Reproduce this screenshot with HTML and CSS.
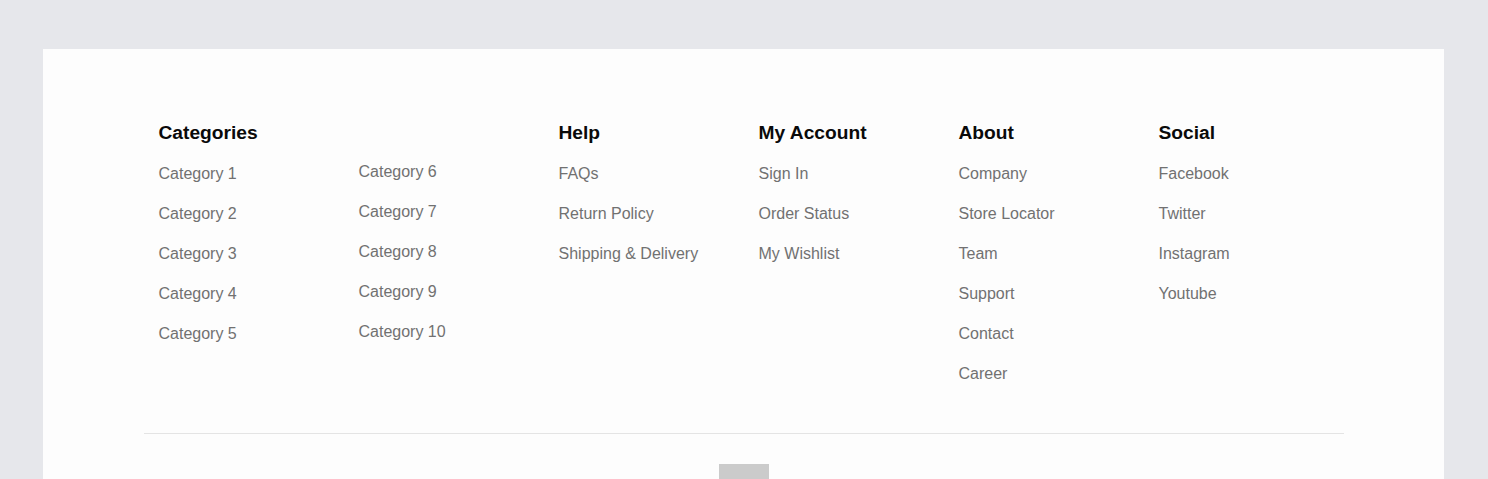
FILE: index.html
```html
<!DOCTYPE html>
<html lang="en">
<head>
<meta charset="utf-8">
<title>Footer</title>
<link rel="stylesheet" href="styles.css">
</head>
<body>
<footer class="panel">
  <div class="container">
    <div class="cols">
      <div class="col">
        <h3 class="col-title">Categories</h3>
        <ul class="links">
          <li><a href="#">Category 1</a></li>
          <li><a href="#">Category 2</a></li>
          <li><a href="#">Category 3</a></li>
          <li><a href="#">Category 4</a></li>
          <li><a href="#">Category 5</a></li>
        </ul>
      </div>
      <div class="col">
        <div class="col-title" aria-hidden="true">&nbsp;</div>
        <ul class="links links-cont">
          <li><a href="#">Category 6</a></li>
          <li><a href="#">Category 7</a></li>
          <li><a href="#">Category 8</a></li>
          <li><a href="#">Category 9</a></li>
          <li><a href="#">Category 10</a></li>
        </ul>
      </div>
      <div class="col">
        <h3 class="col-title">Help</h3>
        <ul class="links">
          <li><a href="#">FAQs</a></li>
          <li><a href="#">Return Policy</a></li>
          <li><a href="#">Shipping &amp; Delivery</a></li>
        </ul>
      </div>
      <div class="col">
        <h3 class="col-title">My Account</h3>
        <ul class="links">
          <li><a href="#">Sign In</a></li>
          <li><a href="#">Order Status</a></li>
          <li><a href="#">My Wishlist</a></li>
        </ul>
      </div>
      <div class="col">
        <h3 class="col-title">About</h3>
        <ul class="links">
          <li><a href="#">Company</a></li>
          <li><a href="#">Store Locator</a></li>
          <li><a href="#">Team</a></li>
          <li><a href="#">Support</a></li>
          <li><a href="#">Contact</a></li>
          <li><a href="#">Career</a></li>
        </ul>
      </div>
      <div class="col">
        <h3 class="col-title">Social</h3>
        <ul class="links">
          <li><a href="#">Facebook</a></li>
          <li><a href="#">Twitter</a></li>
          <li><a href="#">Instagram</a></li>
          <li><a href="#">Youtube</a></li>
        </ul>
      </div>
    </div>
    <div class="divider"></div>
    <div class="bottom">
      <div class="logo-placeholder"></div>
    </div>
  </div>
</footer>
</body>
</html>
```

FILE: styles.css
```css
* { box-sizing: border-box; }

html, body {
  margin: 0;
  padding: 0;
}

body {
  background: #e6e7eb;
  font-family: "Liberation Sans", Arial, Helvetica, sans-serif;
  padding: 49px 44px 0 43px;
  height: 479px;
  overflow: hidden;
}

.panel {
  background: #fdfdfd;
  padding-top: 72px;
  min-height: 430px;
}

.container {
  width: 1200px;
  margin: 0 auto;
}

.cols {
  display: grid;
  grid-template-columns: repeat(6, 200px);
}

.col {
  padding-left: 15px;
}

.col-title {
  margin: 0;
  font-size: 19.2px;
  line-height: 24px;
  font-weight: 700;
  color: #0a0a0a;
}

.links {
  list-style: none;
  margin: 9px 0 0;
  padding: 0;
}

.links-cont {
  margin-top: 7px;
}

.links li {
  line-height: 40px;
  font-size: 16px;
}

.links a {
  color: #717171;
  text-decoration: none;
}

.divider {
  margin-top: 39px;
  height: 1px;
  background: #e4e4e4;
}

.bottom {
  display: flex;
  justify-content: center;
  padding-top: 30px;
}

.logo-placeholder {
  width: 50px;
  height: 30px;
  background: #cbcbcb;
}
```
